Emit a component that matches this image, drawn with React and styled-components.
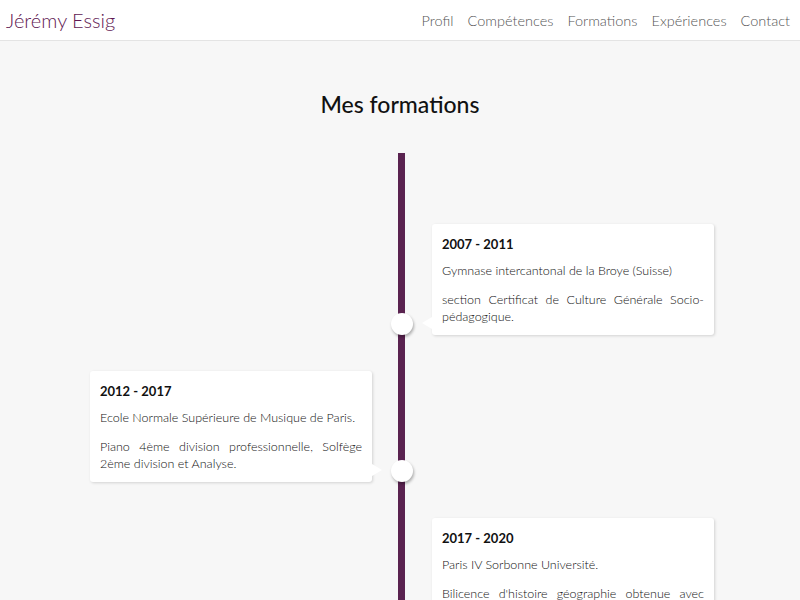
import React from 'react';
import styled, { createGlobalStyle } from 'styled-components';

const GlobalStyle = createGlobalStyle`
  html, body {
    margin: 0;
    padding: 0;
    background-color: #f7f7f7;
    font-family: Lato, "Open Sans", "Liberation Sans", sans-serif;
    overflow: hidden;
  }
  * {
    box-sizing: border-box;
  }
`;

const Header = styled.header`
  display: flex;
  justify-content: space-between;
  align-items: center;
  height: 41px;
  padding: 0 10px 0 6px;
  background-color: white;
  border-bottom: 1px solid #e4e4e4;
`;

const Logo = styled.div`
  font-size: 20px;
  font-weight: 300;
  color: #5f1852;
`;

const Menu = styled.ul`
  display: flex;
  gap: 14px;
  list-style: none;
  margin: 0;
  padding: 0;

  li {
    font-size: 14.5px;
    font-weight: 300;
    color: #555;
  }
`;

const Main = styled.main`
  padding-top: 50px;
`;

const Title = styled.h2`
  margin: 0;
  text-align: center;
  font-size: 23px;
  font-weight: 500;
  line-height: 26px;
  color: #111;
`;

const Timeline = styled.div`
  position: relative;
  display: flex;
  flex-direction: column;
  gap: 36px;
  margin-top: 36px;
  padding-top: 71px;

  &::before {
    content: '';
    position: absolute;
    top: 0;
    bottom: -200px;
    left: 398px;
    width: 7px;
    background-color: #5a2350;
  }
`;

const Item = styled.div`
  position: relative;
  width: 50%;
  align-self: ${({ side }) => (side === 'left' ? 'flex-start' : 'flex-end')};
  padding: ${({ side }) => (side === 'left' ? '0 28px 0 90px' : '0 86px 0 32px')};
`;

const Dot = styled.span`
  position: absolute;
  bottom: 0;
  ${({ side }) => (side === 'left' ? 'right: -13px;' : 'left: -9px;')}
  width: 22px;
  height: 22px;
  border-radius: 50%;
  background-color: white;
  box-shadow: 1px 2px 3px rgba(0, 0, 0, 0.3);
  z-index: 2;
`;

const Card = styled.div`
  position: relative;
  background-color: white;
  border-radius: 3px;
  padding: 10px 10px;
  box-shadow: 1px 1px 3px rgba(0, 0, 0, 0.15);

  &::before {
    content: '';
    position: absolute;
    bottom: 6px;
    ${({ side }) =>
      side === 'left'
        ? 'right: -10px; border-left: 10px solid white;'
        : 'left: -10px; border-right: 10px solid white;'}
    border-top: 6px solid transparent;
    border-bottom: 6px solid transparent;
  }

  h3 {
    margin: 0 0 8px;
    font-size: 13px;
    font-weight: 700;
    line-height: 20px;
    color: #111;
  }

  p {
    margin: 0 0 12px;
    font-size: 12.5px;
    font-weight: 300;
    line-height: 17px;
    color: #111;
    text-align: justify;
  }

  p:last-child {
    margin-bottom: 0;
  }
`;

const formations = [
  {
    years: '2007 - 2011',
    school: 'Gymnase intercantonal de la Broye (Suisse)',
    detail: 'section Certificat de Culture Générale Socio-pédagogique.',
    side: 'right',
  },
  {
    years: '2012 - 2017',
    school: 'Ecole Normale Supérieure de Musique de Paris.',
    detail: 'Piano 4ème division professionnelle, Solfège 2ème division et Analyse.',
    side: 'left',
  },
  {
    years: '2017 - 2020',
    school: 'Paris IV Sorbonne Université.',
    detail: "Bilicence d'histoire géographie obtenue avec mention assez bien.",
    side: 'right',
  },
];

export default function App() {
  return (
    <>
      <GlobalStyle />
      <Header>
        <Logo>Jérémy Essig</Logo>
        <Menu>
          <li>Profil</li>
          <li>Compétences</li>
          <li>Formations</li>
          <li>Expériences</li>
          <li>Contact</li>
        </Menu>
      </Header>
      <Main>
        <Title>Mes formations</Title>
        <Timeline>
          {formations.map((f) => (
            <Item key={f.years} side={f.side}>
              <Card side={f.side}>
                <h3>{f.years}</h3>
                <p>{f.school}</p>
                <p>{f.detail}</p>
              </Card>
              <Dot side={f.side} />
            </Item>
          ))}
        </Timeline>
      </Main>
    </>
  );
}
